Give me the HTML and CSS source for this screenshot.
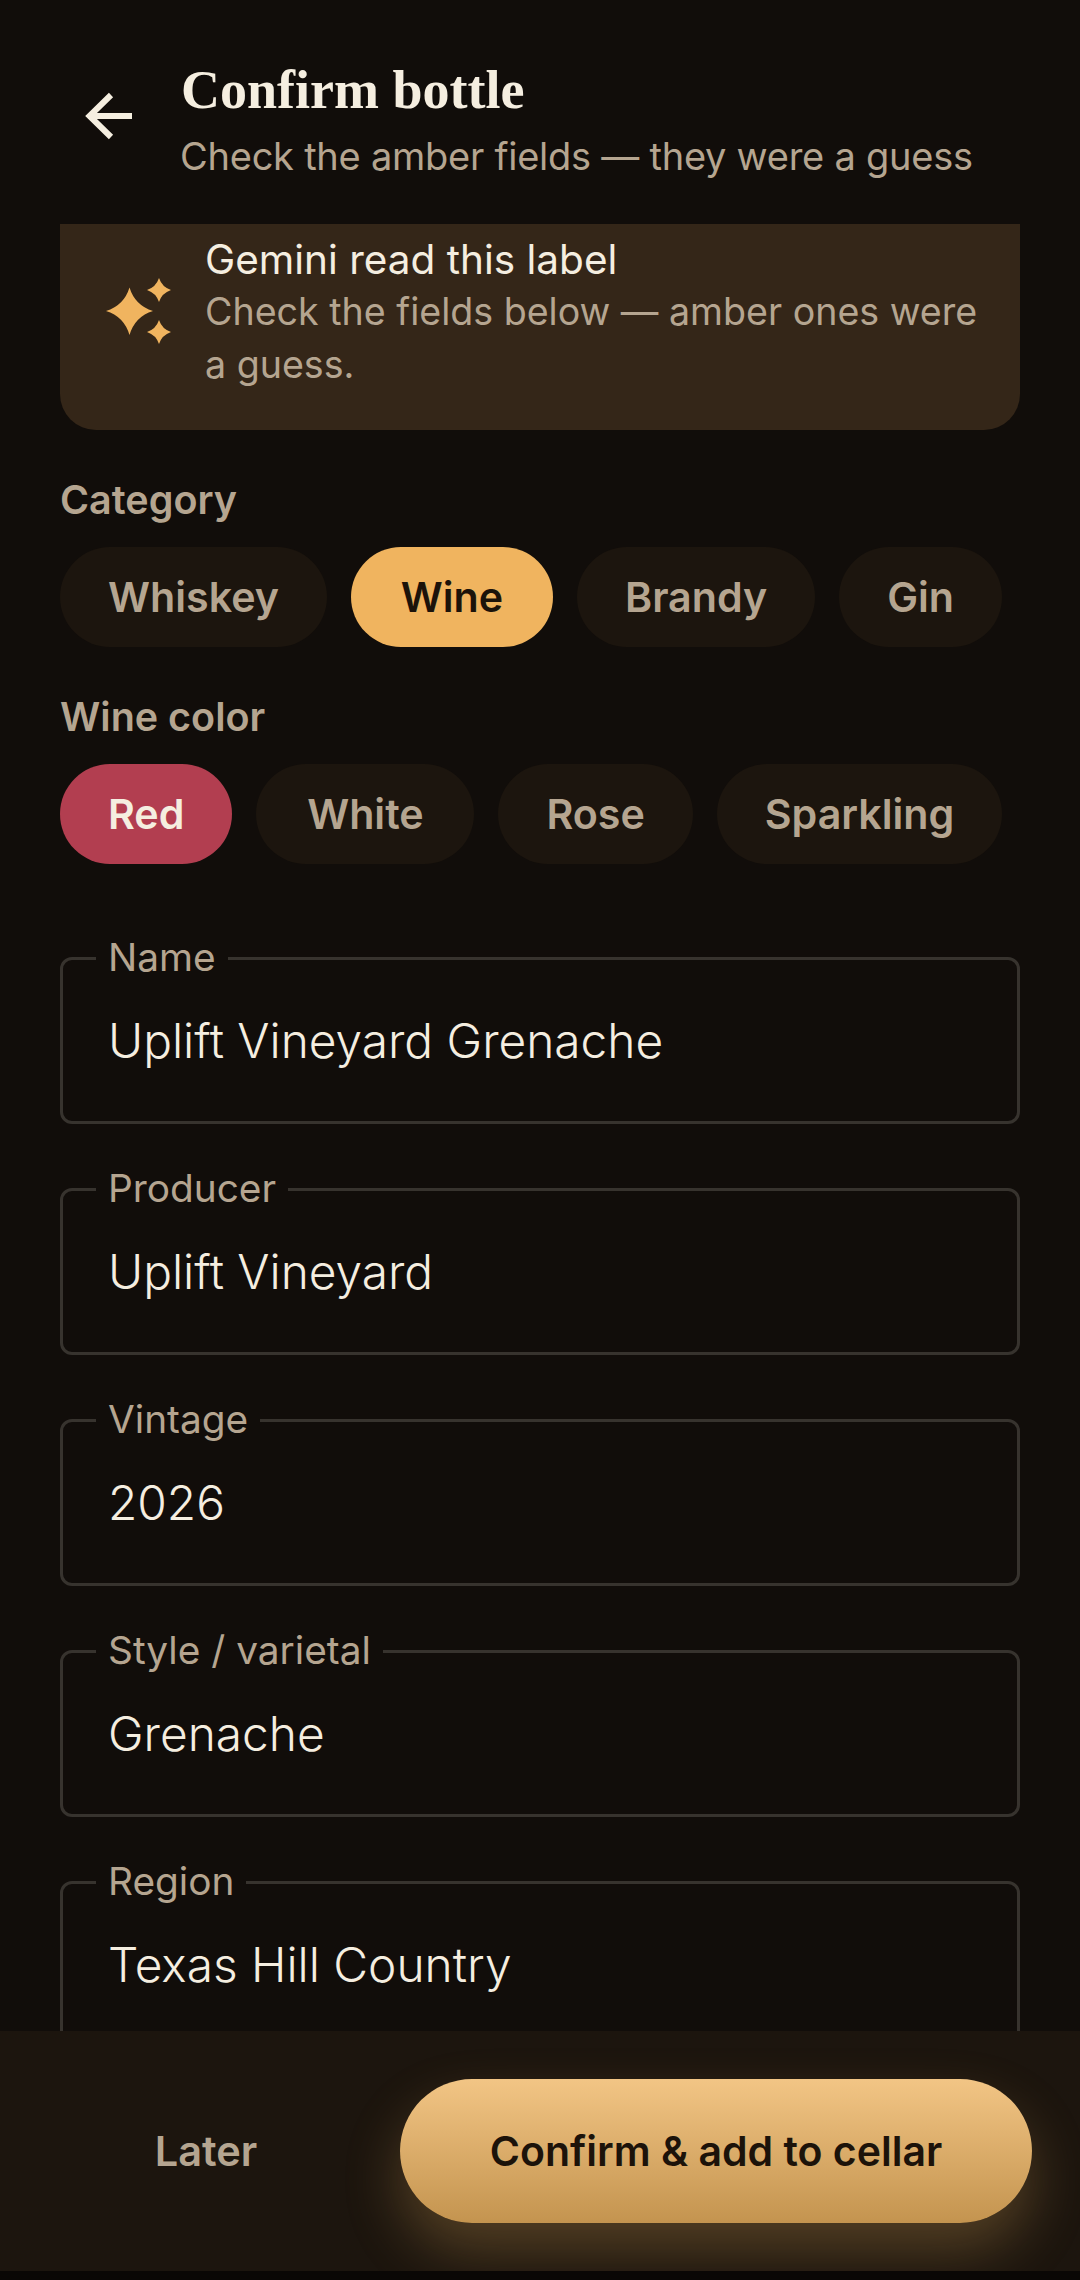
FILE: index.html
```html
<!DOCTYPE html>
<html lang="en">
<head>
<meta charset="utf-8">
<title>Confirm bottle</title>
<link rel="stylesheet" href="styles.css">
</head>
<body>
<div class="screen">
  <header class="topbar">
    <svg class="back" viewBox="0 0 48 48" width="48" height="48"><path d="M48 24H6M27 3 5.500 24 27 45" fill="none" stroke="#f5eee0" stroke-width="6"/></svg>
    <div class="titles">
      <h1 class="title">Confirm bottle</h1>
      <p class="subtitle">Check the amber fields — they were a guess</p>
    </div>
  </header>
  <main class="content">
    <section class="banner">
      <svg class="sparkle" viewBox="0 0 66 66" width="66" height="66"><path fill="#f0b45f" d="M23.500 9.500Q29 27.500 47 33 29 38.500 23.500 57 18 38.500 0 33 18 27.500 23.500 9.500Z"/><path fill="#f0b45f" d="M53 0Q56 9 65 12 56 15 53 24 50 15 41 12 50 9 53 0Z"/><path fill="#f0b45f" d="M53 42Q56 51 65 54 56 57 53 66 50 57 41 54 50 51 53 42Z"/></svg>
      <div class="banner-text">
        <div class="banner-title">Gemini read this label</div>
        <div class="banner-body">Check the fields below — amber ones were a guess.</div>
      </div>
    </section>
    <div class="group-label">Category</div>
    <div class="chips">
      <span class="chip">Whiskey</span>
      <span class="chip chip-amber">Wine</span>
      <span class="chip">Brandy</span>
      <span class="chip">Gin</span>
    </div>
    <div class="group-label">Wine color</div>
    <div class="chips">
      <span class="chip chip-red">Red</span>
      <span class="chip chip-white">White</span>
      <span class="chip">Rose</span>
      <span class="chip">Sparkling</span>
    </div>
    <div class="fields">
      <fieldset class="field"><legend class="legend">Name</legend><div class="value">Uplift Vineyard Grenache</div></fieldset>
      <fieldset class="field"><legend class="legend">Producer</legend><div class="value">Uplift Vineyard</div></fieldset>
      <fieldset class="field"><legend class="legend">Vintage</legend><div class="value">2026</div></fieldset>
      <fieldset class="field"><legend class="legend">Style / varietal</legend><div class="value">Grenache</div></fieldset>
      <fieldset class="field"><legend class="legend">Region</legend><div class="value">Texas Hill Country</div></fieldset>
    </div>
  </main>
  <footer class="actions">
    <button class="later">Later</button>
    <button class="confirm">Confirm &amp; add to cellar</button>
  </footer>
  <div class="navstrip"></div>
</div>
</body>
</html>
```
FILE: styles.css
```css
* { box-sizing: border-box; }
html, body { margin: 0; padding: 0; background: #110d0a; }
body { font-family: Inter, "Liberation Sans", sans-serif; }
.screen { width: 1080px; height: 2280px; display: flex; flex-direction: column; overflow: hidden; background: #110d0a; }
.topbar { height: 224px; flex: none; display: flex; align-items: flex-start; padding: 61px 0 0 84px; gap: 49px; }
.back { flex: none; margin-top: 31px; }
.titles { display: flex; flex-direction: column; }
.title { margin: 0; font: 700 54px/58px "Liberation Serif", serif; color: #f5eee0; }
.subtitle { margin: 13px 0 0 -1px; font-size: 38px; line-height: 48px; letter-spacing: -0.25px; color: #b5a590; }
.content { flex: 1; min-height: 0; overflow: hidden; padding: 0 60px; display: flex; flex-direction: column; }
.banner { flex: none; height: 206px; background: #342618; border-radius: 0 0 36px 36px; display: flex; align-items: flex-start; gap: 33px; padding: 10px 20px 0 46px; margin-bottom: 48px; }
.sparkle { flex: none; margin-top: 44px; }
.banner-title { font-size: 40.5px; line-height: 51px; color: #f5eee0; }
.banner-body { font-size: 37.6px; line-height: 53px; color: #b5a590; }
.group-label { font-size: 39.5px; line-height: 44px; font-weight: 600; color: #b5a590; margin-bottom: 25px; }
.chips { display: flex; gap: 24px; margin-bottom: 48px; }
.chip { height: 100px; padding: 0 48px; border-radius: 50px; background: #1c150e; color: #b5a590; font-size: 41.2px; font-weight: 600; display: flex; align-items: center; justify-content: center; }
.chip-amber { background: #f0b45f; color: #1c130a; min-width: 202px; }
.chip-red { background: #b23e50; color: #f5eee0; }
.chip-white { min-width: 218px; }
.fields { display: flex; flex-direction: column; gap: 64px; margin-top: 45px; flex: none; }
.field { margin: 0; padding: 0 0 0 33px; height: 167px; border: 3px solid #37332e; border-radius: 12px; flex: none; min-inline-size: 0; }
.legend { padding: 0 12px; margin-left: 0; font-size: 38.8px; line-height: 0; color: #b5a590; height: 3px; }
.value { font-size: 47.8px; font-weight: 350; line-height: 56px; color: #f5eee0; padding: 53px 0 0 12px; }
.actions { flex: none; height: 240px; background: #1c150e; display: flex; align-items: center; padding: 0 48px 0 60px; justify-content: space-between; overflow: hidden; }
.later { border: 0; background: none; width: 292px; padding: 0; font: 600 41.5px Inter, sans-serif; color: #b5a590; }
.confirm { border: 0; width: 632px; height: 144px; border-radius: 72px; background: linear-gradient(180deg, #f2c585, #c4944f); color: #1c130a; font: 600 41px Inter, sans-serif; box-shadow: 0 28px 56px rgba(240, 180, 95, 0.26); }
.navstrip { flex: none; height: 9px; background: #0a0705; }
```
